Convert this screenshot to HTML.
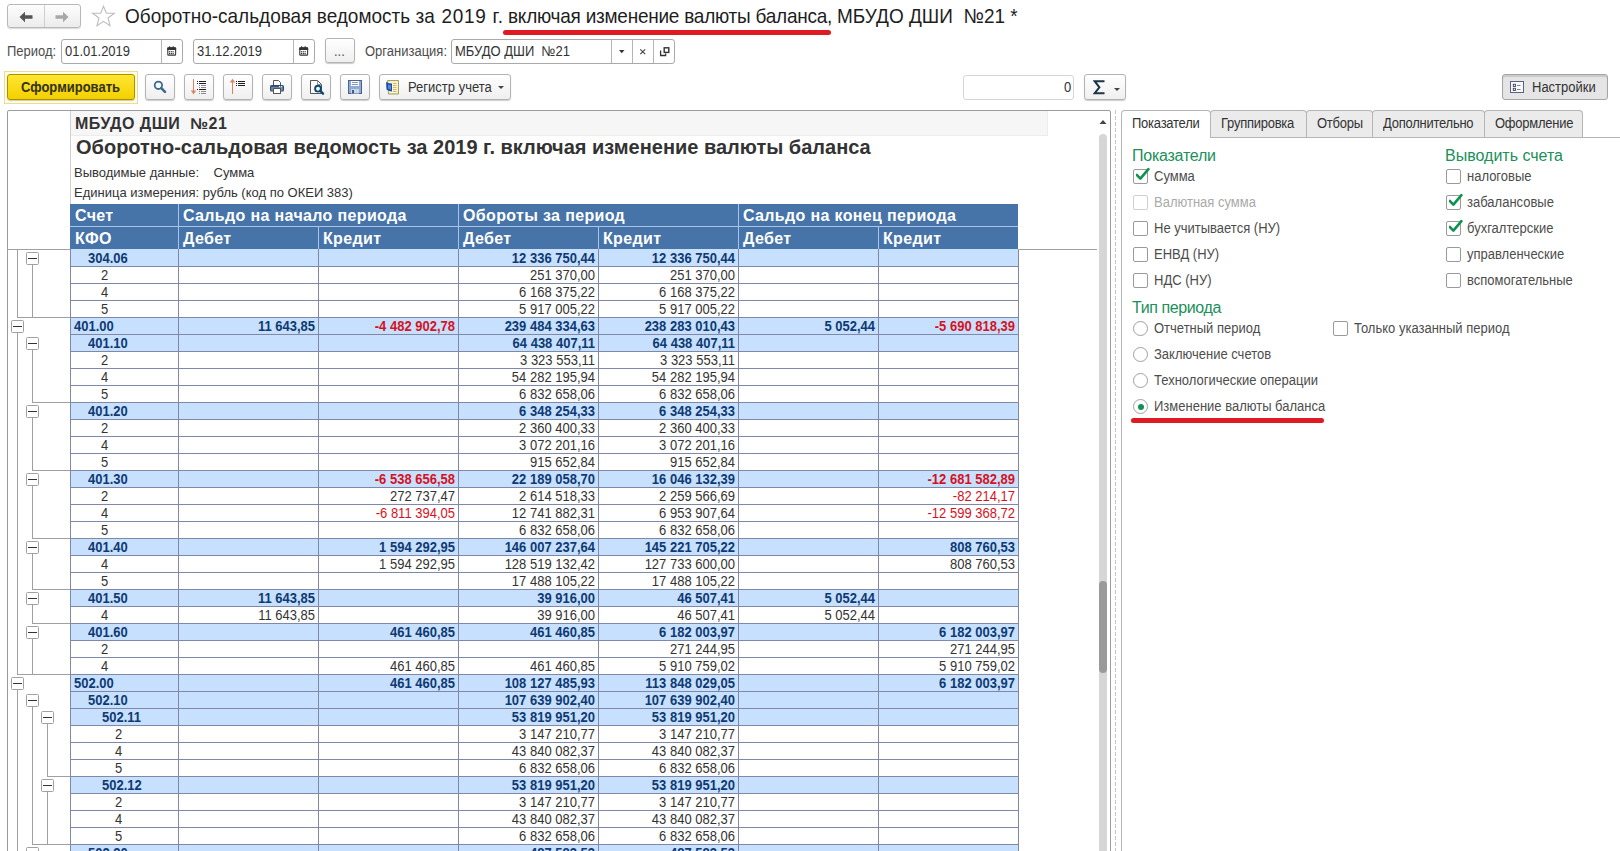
<!DOCTYPE html>
<html><head><meta charset="utf-8">
<style>
*{box-sizing:border-box;margin:0;padding:0}
html,body{width:1620px;height:851px;overflow:hidden;background:#fff;font-family:"Liberation Sans",sans-serif;color:#333;position:relative}
.abs{position:absolute}
.t{position:absolute;white-space:nowrap;line-height:1}
.nav{position:absolute;left:7px;top:4px;width:74px;height:24px;border:1px solid #b9b9b9;border-radius:3px;background:linear-gradient(#fdfdfd,#ececec);box-shadow:0 1px 1px rgba(0,0,0,.15)}
.nav .div{position:absolute;left:36px;top:0;width:1px;height:22px;background:#cfcfcf}
.title{left:125px;top:6px;font-size:19px;color:#1e1e1e;transform:scaleY(1.07);transform-origin:0 0}
.redline{position:absolute;background:#de1b22;border-radius:3px}
.fld{position:absolute;height:25px;border:1px solid #a9a9a9;border-radius:3px;background:#fff}
.fld .sep{position:absolute;top:0;width:1px;height:23px;background:#b5b5b5}
.lbl{font-size:13px;color:#4d4d4d;transform:scaleY(1.1);transform-origin:0 11px}
.btn{position:absolute;height:26px;border:1px solid #b3b3b3;border-radius:3px;background:linear-gradient(#ffffff,#efefef);box-shadow:0 1px 1px rgba(0,0,0,.2)}
.btn svg{position:absolute}
.rp{position:absolute;left:7px;top:110px;width:1104px;height:760px;border:1px solid #9c9c9c;border-radius:2px;background:#fff;overflow:hidden}
.hdr{position:absolute;background:#4673a8;color:#fff;font-weight:bold;font-size:16px;letter-spacing:.35px}
.hdr span{position:absolute;top:4px;line-height:15px;white-space:nowrap}
.hs{position:absolute;background:#a9c3e6}
.r{position:absolute;left:70px;width:948px;height:17px;border-bottom:1px solid #8088aa;font-size:13px}
.r.g{background:#c6e0fd;color:#0f3a73;font-weight:bold}
.r.n{background:#fff;color:#333}
.r span{position:absolute;top:2px;line-height:13px;white-space:nowrap;transform:scaleY(1.1);transform-origin:0 11px}
.r .red{color:#d6121e}
.vl{position:absolute;top:249px;width:1px;height:610px;background:#8088aa}
.tl{position:absolute;background:#a0a0a0}
.box{position:absolute;width:13px;height:13px;border:1px solid #a0a0a0;border-radius:1.5px;background:#fff}
.box:after{content:"";position:absolute;left:1px;top:5px;width:9px;height:1px;background:#333}
.tab{position:absolute;top:110px;height:27px;border:1px solid #b5b5b5;border-bottom:none;border-radius:4px 4px 0 0;background:#ebebeb;font-size:13px;color:#333}
.tab span{position:absolute;top:6px;line-height:13px;white-space:nowrap;letter-spacing:-0.25px;transform:scaleY(1.1);transform-origin:0 11px}
.grp{font-size:16px;color:#208f5a}
.cb{position:absolute;width:15px;height:15px;border:1px solid #9a9a9a;border-radius:2px;background:#fff}
.cb svg{position:absolute;left:2px;top:-3px}
.rad{position:absolute;width:15px;height:15px;border:1px solid #a0a0a0;border-radius:50%;background:#fff}
.opt{font-size:13px;color:#4d4d4d;transform:scaleY(1.1);transform-origin:0 11px}
</style></head><body>

<!-- title bar -->
<div class="nav"><div class="div"></div>
<svg class="abs" style="left:11px;top:5.5px" width="16" height="12" viewBox="0 0 16 12"><path d="M0.5 6 L6 0.8 L6 4.2 L13.5 4.2 L13.5 7.8 L6 7.8 L6 11.2 Z" fill="#555"/></svg>
<svg class="abs" style="left:46px;top:5.5px" width="16" height="12" viewBox="0 0 16 12"><path d="M14.5 6 L9 0.8 L9 4.2 L1.5 4.2 L1.5 7.8 L9 7.8 L9 11.2 Z" fill="#a8a8a8"/></svg>
</div>
<svg class="abs" style="left:91px;top:4px" width="25" height="24" viewBox="0 0 25 24"><path d="M12.5 2.3 L15.3 9.3 L23.3 9.3 L17 14 L19 21.7 L12.5 17.3 L6 21.7 L8 14 L1.7 9.3 L9.7 9.3 Z" fill="none" stroke="#bdbdbd" stroke-width="1.1" stroke-linejoin="miter"/></svg>
<div class="t title">Оборотно-сальдовая ведомость за</div><div class="t title" style="left:441.5px;letter-spacing:0.7px">2019 г.</div><div class="t title" style="left:508px;letter-spacing:-0.24px">включая изменение валюты баланса,</div><div class="t title" style="left:837px">МБУДО ДШИ&nbsp; №21 *</div>
<div class="redline" style="left:503px;top:30px;width:328px;height:4.5px"></div>

<!-- period row -->
<div class="t lbl" style="left:7px;top:45px">Период:</div>
<div class="fld" style="left:61px;top:39px;width:122px"><div class="sep" style="left:99px"></div>
<svg class="abs" style="left:105px;top:6px" width="9.6" height="9.6" viewBox="0 0 10.2 10.8"><rect x="0.6" y="2.1" width="8.8" height="8.2" rx="0.8" fill="#fff" stroke="#333" stroke-width="1.2"/><rect x="0" y="1.6" width="10" height="2.8" rx="0.6" fill="#333"/><rect x="2" y="0.3" width="1.3" height="2.3" fill="#333"/><rect x="6" y="0.3" width="1.3" height="2.3" fill="#333"/><g fill="#333"><circle cx="2.6" cy="6.4" r="0.75"/><circle cx="4.6" cy="6.4" r="0.75"/><circle cx="6.6" cy="6.4" r="0.75"/><circle cx="2.6" cy="8.4" r="0.75"/><circle cx="4.6" cy="8.4" r="0.75"/><circle cx="6.6" cy="8.4" r="0.75"/></g></svg></div>
<div class="t lbl" style="left:65px;top:45px;color:#333">01.01.2019</div>
<div class="fld" style="left:193px;top:39px;width:122px"><div class="sep" style="left:99px"></div>
<svg class="abs" style="left:105px;top:6px" width="9.6" height="9.6" viewBox="0 0 10.2 10.8"><rect x="0.6" y="2.1" width="8.8" height="8.2" rx="0.8" fill="#fff" stroke="#333" stroke-width="1.2"/><rect x="0" y="1.6" width="10" height="2.8" rx="0.6" fill="#333"/><rect x="2" y="0.3" width="1.3" height="2.3" fill="#333"/><rect x="6" y="0.3" width="1.3" height="2.3" fill="#333"/><g fill="#333"><circle cx="2.6" cy="6.4" r="0.75"/><circle cx="4.6" cy="6.4" r="0.75"/><circle cx="6.6" cy="6.4" r="0.75"/><circle cx="2.6" cy="8.4" r="0.75"/><circle cx="4.6" cy="8.4" r="0.75"/><circle cx="6.6" cy="8.4" r="0.75"/></g></svg></div>
<div class="t lbl" style="left:197px;top:45px;color:#333">31.12.2019</div>
<div class="btn" style="left:325px;top:38px;width:30px;height:25px"></div>
<div class="t lbl" style="left:334px;top:45px;color:#555">...</div>
<div class="t lbl" style="left:365px;top:45px">Организация:</div>
<div class="fld" style="left:451px;top:39px;width:224px"><div class="sep" style="left:159px"></div><div class="sep" style="left:180px"></div><div class="sep" style="left:201px"></div>



</div>
<div class="t lbl" style="left:455px;top:45px;color:#333">МБУДО ДШИ&nbsp; №21</div>
<svg class="abs" style="left:600px;top:36px" width="80" height="30" viewBox="600 36 80 30">
<path d="M619 50 H624.5 L621.75 53.2 Z" fill="#333"/>
<path d="M640.3 49.3 L645.2 54.2 M645.2 49.3 L640.3 54.2" stroke="#444" stroke-width="1.15"/>
<rect x="664.2" y="47.8" width="4.6" height="4.6" fill="none" stroke="#333" stroke-width="1.4"/>
<path d="M660.6 50.6 V55.5 H665.6 V53.5" fill="none" stroke="#333" stroke-width="1.3"/>
</svg>

<!-- toolbar -->
<div class="abs" style="left:4px;top:71px;width:134px;height:33px;border:1px solid #eadc98;background:#fffde6"></div>
<div class="abs" style="left:7px;top:74px;width:128px;height:26px;border:1px solid #a89200;border-radius:3px;background:linear-gradient(#ffe633,#f4d000);box-shadow:0 1px 1px rgba(0,0,0,.2)"></div>
<div class="t" style="left:21px;top:81px;font-size:13px;font-weight:bold;color:#33330f;transform:scaleY(1.1);transform-origin:0 11px">Сформировать</div>
<div class="btn" style="left:145px;top:74px;width:30px"></div>
<div class="btn" style="left:184px;top:74px;width:30px"></div>
<div class="btn" style="left:223px;top:74px;width:30px"></div>
<div class="btn" style="left:262px;top:74px;width:30px"></div>
<div class="btn" style="left:301px;top:74px;width:30px"></div>
<div class="btn" style="left:340px;top:74px;width:30px"></div>
<div class="btn" style="left:379px;top:74px;width:132px"></div>
<svg class="abs" style="left:0;top:70px" width="520" height="32" viewBox="0 70 520 32">
<circle cx="158.4" cy="85.3" r="3.7" fill="none" stroke="#3a6a8c" stroke-width="1.8"/>
<path d="M161.3 88.2 L165 91.9" stroke="#3a6a8c" stroke-width="2.6" stroke-linecap="round"/>
<g shape-rendering="crispEdges">
<rect x="193" y="79" width="1" height="12" fill="#e08262"/>
<g fill="#1e1e1e"><rect x="197" y="81" width="1" height="1"/><rect x="199" y="81" width="7" height="1"/><rect x="197" y="83" width="1" height="1"/><rect x="199" y="83" width="7" height="1"/><rect x="197" y="89" width="1" height="1"/><rect x="199" y="89" width="7" height="1"/></g>
<g fill="#8c8c8c"><rect x="199" y="85" width="1" height="1"/><rect x="201" y="85" width="5" height="1"/><rect x="199" y="87" width="1" height="1"/><rect x="201" y="87" width="5" height="1"/><rect x="199" y="91" width="1" height="1"/><rect x="201" y="91" width="5" height="1"/><rect x="199" y="93" width="1" height="1"/><rect x="201" y="93" width="5" height="1"/></g>
<rect x="232" y="82" width="1" height="12" fill="#e08262"/>
<g fill="#1e1e1e"><rect x="236" y="81" width="1" height="1"/><rect x="238" y="81" width="7" height="1"/><rect x="236" y="83" width="1" height="1"/><rect x="238" y="83" width="7" height="1"/><rect x="236" y="85" width="1" height="1"/><rect x="238" y="85" width="7" height="1"/></g>
</g>
<path d="M190.8 90.5 H196.2 L193.5 94.5 Z" fill="#e08262"/>
<path d="M229.8 82.5 H235.2 L232.5 78.8 Z" fill="#e08262"/>
<path d="M273.5 85 V80.5 H278.5 L280.5 82.5 V85" fill="#fff" stroke="#555" stroke-width="1"/>
<rect x="270" y="85" width="14" height="6.5" rx="1.6" fill="#2c4a6a"/>
<rect x="271.2" y="86.8" width="11.6" height="3.8" fill="#6f8fb5"/>
<rect x="271.2" y="86.2" width="11.6" height="0.9" fill="#3b5878"/>
<rect x="279" y="86" width="1.2" height="1.1" fill="#fff"/><rect x="281" y="86" width="1.2" height="1.1" fill="#fff"/>
<rect x="273.5" y="88.5" width="7" height="5" fill="#fff" stroke="#555" stroke-width="1"/>
<path d="M310.5 80.5 H317.5 L321.5 84.5 V93.5 H310.5 Z" fill="#fff" stroke="#555" stroke-width="1"/>
<path d="M317.5 80.5 V84.5 H321.5" fill="none" stroke="#777" stroke-width="0.8"/>
<circle cx="318" cy="88.7" r="2.9" fill="#eefaff" stroke="#0e4a6e" stroke-width="1.9"/>
<path d="M320.2 90.9 L323 93.7" stroke="#0e4a6e" stroke-width="2.4" stroke-linecap="round"/>
<rect x="348.5" y="80.5" width="13" height="13" fill="#8eaad6" stroke="#4a6290" stroke-width="1"/>
<rect x="351" y="81" width="8" height="5" fill="#fff"/>
<rect x="352" y="82" width="6" height="0.9" fill="#7a8aa8"/><rect x="352" y="84" width="6" height="0.9" fill="#7a8aa8"/>
<rect x="351" y="89" width="8" height="4.5" fill="#c8d6e2"/>
<rect x="352" y="90" width="2" height="3.5" fill="#3f5f8f"/>
<path d="M387.5 80.5 H398.5 V94 H388.5 Z" fill="#f6e8b0" stroke="#a39d70" stroke-width="1"/>
<rect x="389" y="81.5" width="8.5" height="11.5" fill="#fcf4cc"/>
<g fill="#c8b268"><rect x="393" y="83" width="3.5" height="0.9"/><rect x="393" y="85" width="3.5" height="0.9"/><rect x="393" y="87" width="3.5" height="0.9"/><rect x="393" y="89" width="3.5" height="0.9"/><rect x="393" y="91" width="3.5" height="0.9"/></g>
<path d="M386 82 Q389 83.5 392 83.5 V91.5 Q389 91.5 386.5 89.5 Z" fill="#1d4ca6"/>
<path d="M388 84.5 Q389.5 85.2 391 85.2 V89.5 Q389.5 89.5 388 88.5 Z" fill="#4a8ad8"/>
<path d="M498 86 H504 L501 89 Z" fill="#444"/>
</svg>
<div class="t lbl" style="left:408px;top:81px;color:#333">Регистр учета</div>
<div class="fld" style="left:963px;top:75px;width:111px;height:25px;border-color:#d6d6d6"></div>
<div class="t lbl" style="left:1064px;top:81px;color:#333">0</div>
<div class="btn" style="left:1084px;top:74px;width:42px"><svg style="left:8px;top:5px" width="13" height="15" viewBox="0 0 13 15"><path d="M11.5 1.2 H1.6 L6.4 7.3 L1.6 13.3 H11.5" fill="none" stroke="#1f3346" stroke-width="2"/></svg><svg style="left:28px;top:12px" width="8" height="5" viewBox="0 0 8 5"><path d="M1 1h6l-3 3z" fill="#444"/></svg></div>
<div class="abs" style="left:1502px;top:74px;width:106px;height:26px;border:1px solid #a5a5a5;border-radius:3px;background:#e5e5e5;box-shadow:inset 0 2px 1px rgba(0,0,0,.12)"><svg class="abs" style="left:7px;top:6px" width="15" height="13" viewBox="0 0 15 13"><rect x="0.5" y="0.5" width="13" height="11" fill="#f8f8ff" stroke="#5c6082"/><rect x="3.3" y="3.3" width="2.2" height="2.2" fill="#fff" stroke="#3c4060" stroke-width="0.9"/><rect x="3.3" y="7.3" width="2.2" height="2.2" fill="#fff" stroke="#3c4060" stroke-width="0.9"/><path d="M7 4.5h3.5M7 8.5h3.5" stroke="#777" stroke-width="0.9"/></svg></div>
<div class="t lbl" style="left:1532px;top:81px;color:#333">Настройки</div>

<!-- report panel -->
<div class="rp"></div>
<div class="abs" style="left:71px;top:111px;width:977px;height:25px;background:#f6f6f6;border-right:1px solid #ececec;border-bottom:1px solid #ececec"></div>
<div class="abs" style="left:70px;top:111px;width:1px;height:138px;background:#d0d0d0"></div>
<div class="t" style="left:75px;top:116px;font-size:16px;font-weight:bold;color:#333;letter-spacing:.5px">МБУДО ДШИ&nbsp; №21</div>
<div class="t" style="left:76px;top:137px;font-size:20px;font-weight:bold;color:#333">Оборотно-сальдовая ведомость за 2019 г. включая изменение валюты баланса</div>
<div class="t" style="left:74px;top:166px;font-size:13px;color:#333">Выводимые данные:&nbsp;&nbsp;&nbsp; Сумма</div>
<div class="t" style="left:74px;top:186px;font-size:13px;color:#333">Единица измерения: рубль (код по ОКЕИ 383)</div>

<div class="hdr" style="left:70px;top:204px;width:948px;height:45px">
<div class="hs" style="left:0;top:22px;width:948px;height:1px"></div>
<div class="hs" style="left:108px;top:0;width:1px;height:45px"></div>
<div class="hs" style="left:388px;top:0;width:1px;height:45px"></div>
<div class="hs" style="left:668px;top:0;width:1px;height:45px"></div>
<div class="hs" style="left:248px;top:23px;width:1px;height:22px"></div>
<div class="hs" style="left:528px;top:23px;width:1px;height:22px"></div>
<div class="hs" style="left:808px;top:23px;width:1px;height:22px"></div>
<span style="left:5px">Счет</span><span style="left:113px">Сальдо на начало периода</span><span style="left:393px">Обороты за период</span><span style="left:673px">Сальдо на конец периода</span>
<span style="left:5px;top:27px">КФО</span><span style="left:113px;top:27px">Дебет</span><span style="left:253px;top:27px">Кредит</span><span style="left:393px;top:27px">Дебет</span><span style="left:533px;top:27px">Кредит</span><span style="left:673px;top:27px">Дебет</span><span style="left:813px;top:27px">Кредит</span>
</div>

<div class="r g" style="top:250px">
<span class="lab" style="left:18px">304.06</span>
<span class="v" style="right:423px">12 336 750,44</span>
<span class="v" style="right:283px">12 336 750,44</span>
</div>
<div class="r n" style="top:267px">
<span class="lab" style="left:31px">2</span>
<span class="v" style="right:423px">251 370,00</span>
<span class="v" style="right:283px">251 370,00</span>
</div>
<div class="r n" style="top:284px">
<span class="lab" style="left:31px">4</span>
<span class="v" style="right:423px">6 168 375,22</span>
<span class="v" style="right:283px">6 168 375,22</span>
</div>
<div class="r n" style="top:301px">
<span class="lab" style="left:31px">5</span>
<span class="v" style="right:423px">5 917 005,22</span>
<span class="v" style="right:283px">5 917 005,22</span>
</div>
<div class="r g" style="top:318px">
<span class="lab" style="left:4px">401.00</span>
<span class="v" style="right:703px">11 643,85</span>
<span class="v red" style="right:563px">-4 482 902,78</span>
<span class="v" style="right:423px">239 484 334,63</span>
<span class="v" style="right:283px">238 283 010,43</span>
<span class="v" style="right:143px">5 052,44</span>
<span class="v red" style="right:3px">-5 690 818,39</span>
</div>
<div class="r g" style="top:335px">
<span class="lab" style="left:18px">401.10</span>
<span class="v" style="right:423px">64 438 407,11</span>
<span class="v" style="right:283px">64 438 407,11</span>
</div>
<div class="r n" style="top:352px">
<span class="lab" style="left:31px">2</span>
<span class="v" style="right:423px">3 323 553,11</span>
<span class="v" style="right:283px">3 323 553,11</span>
</div>
<div class="r n" style="top:369px">
<span class="lab" style="left:31px">4</span>
<span class="v" style="right:423px">54 282 195,94</span>
<span class="v" style="right:283px">54 282 195,94</span>
</div>
<div class="r n" style="top:386px">
<span class="lab" style="left:31px">5</span>
<span class="v" style="right:423px">6 832 658,06</span>
<span class="v" style="right:283px">6 832 658,06</span>
</div>
<div class="r g" style="top:403px">
<span class="lab" style="left:18px">401.20</span>
<span class="v" style="right:423px">6 348 254,33</span>
<span class="v" style="right:283px">6 348 254,33</span>
</div>
<div class="r n" style="top:420px">
<span class="lab" style="left:31px">2</span>
<span class="v" style="right:423px">2 360 400,33</span>
<span class="v" style="right:283px">2 360 400,33</span>
</div>
<div class="r n" style="top:437px">
<span class="lab" style="left:31px">4</span>
<span class="v" style="right:423px">3 072 201,16</span>
<span class="v" style="right:283px">3 072 201,16</span>
</div>
<div class="r n" style="top:454px">
<span class="lab" style="left:31px">5</span>
<span class="v" style="right:423px">915 652,84</span>
<span class="v" style="right:283px">915 652,84</span>
</div>
<div class="r g" style="top:471px">
<span class="lab" style="left:18px">401.30</span>
<span class="v red" style="right:563px">-6 538 656,58</span>
<span class="v" style="right:423px">22 189 058,70</span>
<span class="v" style="right:283px">16 046 132,39</span>
<span class="v red" style="right:3px">-12 681 582,89</span>
</div>
<div class="r n" style="top:488px">
<span class="lab" style="left:31px">2</span>
<span class="v" style="right:563px">272 737,47</span>
<span class="v" style="right:423px">2 614 518,33</span>
<span class="v" style="right:283px">2 259 566,69</span>
<span class="v red" style="right:3px">-82 214,17</span>
</div>
<div class="r n" style="top:505px">
<span class="lab" style="left:31px">4</span>
<span class="v red" style="right:563px">-6 811 394,05</span>
<span class="v" style="right:423px">12 741 882,31</span>
<span class="v" style="right:283px">6 953 907,64</span>
<span class="v red" style="right:3px">-12 599 368,72</span>
</div>
<div class="r n" style="top:522px">
<span class="lab" style="left:31px">5</span>
<span class="v" style="right:423px">6 832 658,06</span>
<span class="v" style="right:283px">6 832 658,06</span>
</div>
<div class="r g" style="top:539px">
<span class="lab" style="left:18px">401.40</span>
<span class="v" style="right:563px">1 594 292,95</span>
<span class="v" style="right:423px">146 007 237,64</span>
<span class="v" style="right:283px">145 221 705,22</span>
<span class="v" style="right:3px">808 760,53</span>
</div>
<div class="r n" style="top:556px">
<span class="lab" style="left:31px">4</span>
<span class="v" style="right:563px">1 594 292,95</span>
<span class="v" style="right:423px">128 519 132,42</span>
<span class="v" style="right:283px">127 733 600,00</span>
<span class="v" style="right:3px">808 760,53</span>
</div>
<div class="r n" style="top:573px">
<span class="lab" style="left:31px">5</span>
<span class="v" style="right:423px">17 488 105,22</span>
<span class="v" style="right:283px">17 488 105,22</span>
</div>
<div class="r g" style="top:590px">
<span class="lab" style="left:18px">401.50</span>
<span class="v" style="right:703px">11 643,85</span>
<span class="v" style="right:423px">39 916,00</span>
<span class="v" style="right:283px">46 507,41</span>
<span class="v" style="right:143px">5 052,44</span>
</div>
<div class="r n" style="top:607px">
<span class="lab" style="left:31px">4</span>
<span class="v" style="right:703px">11 643,85</span>
<span class="v" style="right:423px">39 916,00</span>
<span class="v" style="right:283px">46 507,41</span>
<span class="v" style="right:143px">5 052,44</span>
</div>
<div class="r g" style="top:624px">
<span class="lab" style="left:18px">401.60</span>
<span class="v" style="right:563px">461 460,85</span>
<span class="v" style="right:423px">461 460,85</span>
<span class="v" style="right:283px">6 182 003,97</span>
<span class="v" style="right:3px">6 182 003,97</span>
</div>
<div class="r n" style="top:641px">
<span class="lab" style="left:31px">2</span>
<span class="v" style="right:283px">271 244,95</span>
<span class="v" style="right:3px">271 244,95</span>
</div>
<div class="r n" style="top:658px">
<span class="lab" style="left:31px">4</span>
<span class="v" style="right:563px">461 460,85</span>
<span class="v" style="right:423px">461 460,85</span>
<span class="v" style="right:283px">5 910 759,02</span>
<span class="v" style="right:3px">5 910 759,02</span>
</div>
<div class="r g" style="top:675px">
<span class="lab" style="left:4px">502.00</span>
<span class="v" style="right:563px">461 460,85</span>
<span class="v" style="right:423px">108 127 485,93</span>
<span class="v" style="right:283px">113 848 029,05</span>
<span class="v" style="right:3px">6 182 003,97</span>
</div>
<div class="r g" style="top:692px">
<span class="lab" style="left:18px">502.10</span>
<span class="v" style="right:423px">107 639 902,40</span>
<span class="v" style="right:283px">107 639 902,40</span>
</div>
<div class="r g" style="top:709px">
<span class="lab" style="left:32px">502.11</span>
<span class="v" style="right:423px">53 819 951,20</span>
<span class="v" style="right:283px">53 819 951,20</span>
</div>
<div class="r n" style="top:726px">
<span class="lab" style="left:45px">2</span>
<span class="v" style="right:423px">3 147 210,77</span>
<span class="v" style="right:283px">3 147 210,77</span>
</div>
<div class="r n" style="top:743px">
<span class="lab" style="left:45px">4</span>
<span class="v" style="right:423px">43 840 082,37</span>
<span class="v" style="right:283px">43 840 082,37</span>
</div>
<div class="r n" style="top:760px">
<span class="lab" style="left:45px">5</span>
<span class="v" style="right:423px">6 832 658,06</span>
<span class="v" style="right:283px">6 832 658,06</span>
</div>
<div class="r g" style="top:777px">
<span class="lab" style="left:32px">502.12</span>
<span class="v" style="right:423px">53 819 951,20</span>
<span class="v" style="right:283px">53 819 951,20</span>
</div>
<div class="r n" style="top:794px">
<span class="lab" style="left:45px">2</span>
<span class="v" style="right:423px">3 147 210,77</span>
<span class="v" style="right:283px">3 147 210,77</span>
</div>
<div class="r n" style="top:811px">
<span class="lab" style="left:45px">4</span>
<span class="v" style="right:423px">43 840 082,37</span>
<span class="v" style="right:283px">43 840 082,37</span>
</div>
<div class="r n" style="top:828px">
<span class="lab" style="left:45px">5</span>
<span class="v" style="right:423px">6 832 658,06</span>
<span class="v" style="right:283px">6 832 658,06</span>
</div>
<div class="r g" style="top:845px">
<span class="lab" style="left:18px">502.20</span>
<span class="v" style="right:423px">487 583,53</span>
<span class="v" style="right:283px">487 583,53</span>
</div>
<div class="abs" style="left:71px;top:249px;width:947px;height:1px;background:#c6e0fd"></div>
<div class="vl" style="left:70px"></div><div class="vl" style="left:178px"></div><div class="vl" style="left:318px"></div><div class="vl" style="left:458px"></div><div class="vl" style="left:598px"></div><div class="vl" style="left:738px"></div><div class="vl" style="left:878px"></div><div class="vl" style="left:1018px"></div>
<div class="abs" style="left:7px;top:249px;width:63px;height:1px;background:#a0a0a0"></div>
<div class="abs" style="left:1018px;top:249px;width:79px;height:1px;background:#a0a0a0"></div>
<div class="tl" style="left:17px;top:250px;width:1px;height:68px"></div>
<div class="tl" style="left:17px;top:317px;width:53px;height:1px"></div>
<div class="box" style="left:26px;top:252px"></div>
<div class="tl" style="left:32px;top:265px;width:1px;height:53px"></div>
<div class="box" style="left:11px;top:320px"></div>
<div class="tl" style="left:17px;top:333px;width:1px;height:342px"></div>
<div class="tl" style="left:17px;top:674px;width:53px;height:1px"></div>
<div class="box" style="left:26px;top:337px"></div>
<div class="tl" style="left:32px;top:350px;width:1px;height:53px"></div>
<div class="tl" style="left:32px;top:402px;width:38px;height:1px"></div>
<div class="box" style="left:26px;top:405px"></div>
<div class="tl" style="left:32px;top:418px;width:1px;height:53px"></div>
<div class="tl" style="left:32px;top:470px;width:38px;height:1px"></div>
<div class="box" style="left:26px;top:473px"></div>
<div class="tl" style="left:32px;top:486px;width:1px;height:53px"></div>
<div class="tl" style="left:32px;top:538px;width:38px;height:1px"></div>
<div class="box" style="left:26px;top:541px"></div>
<div class="tl" style="left:32px;top:554px;width:1px;height:36px"></div>
<div class="tl" style="left:32px;top:589px;width:38px;height:1px"></div>
<div class="box" style="left:26px;top:592px"></div>
<div class="tl" style="left:32px;top:605px;width:1px;height:19px"></div>
<div class="tl" style="left:32px;top:623px;width:38px;height:1px"></div>
<div class="box" style="left:26px;top:626px"></div>
<div class="tl" style="left:32px;top:639px;width:1px;height:36px"></div>
<div class="tl" style="left:32px;top:674px;width:38px;height:1px"></div>
<div class="box" style="left:11px;top:677px"></div>
<div class="tl" style="left:17px;top:690px;width:1px;height:171px"></div>
<div class="box" style="left:26px;top:694px"></div>
<div class="tl" style="left:32px;top:707px;width:1px;height:138px"></div>
<div class="tl" style="left:32px;top:844px;width:38px;height:1px"></div>
<div class="box" style="left:41px;top:711px"></div>
<div class="tl" style="left:47px;top:724px;width:1px;height:53px"></div>
<div class="tl" style="left:47px;top:776px;width:23px;height:1px"></div>
<div class="box" style="left:41px;top:779px"></div>
<div class="tl" style="left:47px;top:792px;width:1px;height:53px"></div>
<div class="box" style="left:26px;top:847px"></div>

<!-- scrollbar -->
<svg class="abs" style="left:1099px;top:119px" width="8" height="6" viewBox="0 0 8 6"><path d="M0.5 5 L4 1 L7.5 5 Z" fill="#444"/></svg>
<div class="abs" style="left:1099px;top:134px;width:8px;height:730px;background:#d6d6d6;border-radius:4px"></div>
<div class="abs" style="left:1099px;top:581px;width:8px;height:92px;background:#9a9a9a;border-radius:4px"></div>

<!-- splitter -->
<div class="abs" style="left:1115px;top:110px;width:1px;height:741px;background:repeating-linear-gradient(#c4c4c4 0 4px,#fff 4px 6px)"></div>

<!-- right panel -->
<div class="abs" style="left:1121px;top:137px;width:499px;height:1px;background:#b5b5b5"></div>
<div class="abs" style="left:1121px;top:118px;width:1px;height:733px;background:#b5b5b5"></div>
<div class="tab" style="left:1121px;width:90px;background:#fff;z-index:2;height:28px"><span style="left:10px">Показатели</span></div>
<div class="tab" style="left:1210px;width:97px"><span style="left:10px">Группировка</span></div>
<div class="tab" style="left:1306px;width:67px"><span style="left:10px">Отборы</span></div>
<div class="tab" style="left:1372px;width:113px"><span style="left:10px">Дополнительно</span></div>
<div class="tab" style="left:1484px;width:99px"><span style="left:10px">Оформление</span></div>

<div class="t grp" style="left:1132px;top:148px;letter-spacing:-0.24px">Показатели</div>
<div class="t grp" style="left:1445px;top:148px">Выводить счета</div>
<div class="cb" style="left:1133px;top:169px"><svg width="14" height="14" viewBox="0 0 14 14"><path d="M0.8 8 L4.4 11.6 L12.4 2.2" fill="none" stroke="#10924f" stroke-width="2.6" stroke-linecap="round" stroke-linejoin="round"/></svg></div><div class="t opt" style="left:1154px;top:170px">Сумма</div>
<div class="cb" style="left:1133px;top:195px;border-color:#d0d0d0"></div><div class="t opt" style="left:1154px;top:196px;color:#aaa">Валютная сумма</div>
<div class="cb" style="left:1133px;top:221px"></div><div class="t opt" style="left:1154px;top:222px">Не учитывается (НУ)</div>
<div class="cb" style="left:1133px;top:247px"></div><div class="t opt" style="left:1154px;top:248px">ЕНВД (НУ)</div>
<div class="cb" style="left:1133px;top:273px"></div><div class="t opt" style="left:1154px;top:274px">НДС (НУ)</div>
<div class="cb" style="left:1446px;top:169px"></div><div class="t opt" style="left:1467px;top:170px">налоговые</div>
<div class="cb" style="left:1446px;top:195px"><svg width="14" height="14" viewBox="0 0 14 14"><path d="M0.8 8 L4.4 11.6 L12.4 2.2" fill="none" stroke="#10924f" stroke-width="2.6" stroke-linecap="round" stroke-linejoin="round"/></svg></div><div class="t opt" style="left:1467px;top:196px">забалансовые</div>
<div class="cb" style="left:1446px;top:221px"><svg width="14" height="14" viewBox="0 0 14 14"><path d="M0.8 8 L4.4 11.6 L12.4 2.2" fill="none" stroke="#10924f" stroke-width="2.6" stroke-linecap="round" stroke-linejoin="round"/></svg></div><div class="t opt" style="left:1467px;top:222px">бухгалтерские</div>
<div class="cb" style="left:1446px;top:247px"></div><div class="t opt" style="left:1467px;top:248px">управленческие</div>
<div class="cb" style="left:1446px;top:273px"></div><div class="t opt" style="left:1467px;top:274px">вспомогательные</div>

<div class="t grp" style="left:1132px;top:300px;letter-spacing:-0.4px">Тип периода</div>
<div class="rad" style="left:1133px;top:321px"></div><div class="t opt" style="left:1154px;top:322px">Отчетный период</div>
<div class="rad" style="left:1133px;top:347px"></div><div class="t opt" style="left:1154px;top:348px">Заключение счетов</div>
<div class="rad" style="left:1133px;top:373px"></div><div class="t opt" style="left:1154px;top:374px">Технологические операции</div>
<div class="rad" style="left:1133px;top:399px"><div class="abs" style="left:3.5px;top:3.5px;width:6px;height:6px;border-radius:50%;background:#13905a"></div></div><div class="t opt" style="left:1154px;top:400px">Изменение валюты баланса</div>
<div class="cb" style="left:1333px;top:321px"></div><div class="t opt" style="left:1354px;top:322px">Только указанный период</div>
<div class="redline" style="left:1131px;top:418px;width:193px;height:4.5px"></div>

</body></html>
